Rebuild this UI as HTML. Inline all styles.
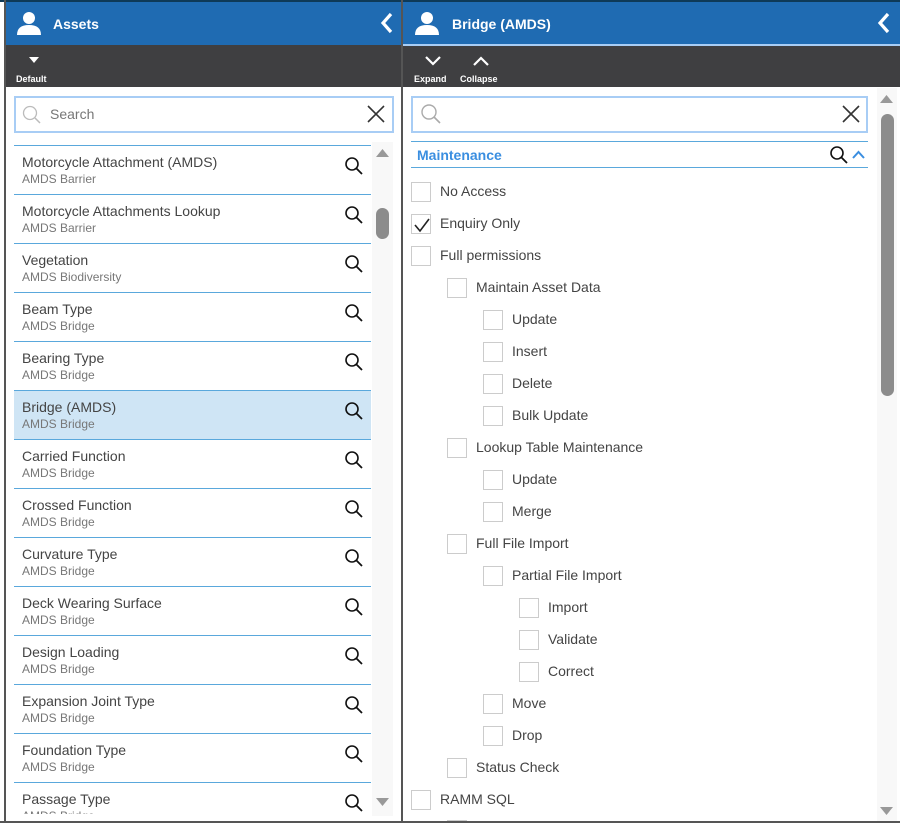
<!DOCTYPE html>
<html><head><meta charset="utf-8"><style>
*{margin:0;padding:0;box-sizing:border-box}
body{width:900px;height:823px;overflow:hidden;background:#fff;font-family:"Liberation Sans",Arial,sans-serif;position:relative}
.a{position:absolute}
.hdr{background:#1f6bb2;top:2px;height:43px}
.tb{background:#3f3f41;top:45px;height:42px}
.ht{color:#fff;font-weight:bold;font-size:14px;top:16px}
.tl{color:#fff;font-weight:bold;font-size:9px}
.row{position:absolute;left:14px;width:357px;height:49px;border-bottom:1px solid #5aa8dc}
.row .t{position:absolute;left:8px;top:8px;font-size:14px;color:#444}
.row .s{position:absolute;left:8px;top:26px;font-size:12px;color:#777}
.row svg{position:absolute;left:330px;top:10px}
.cb{position:absolute;width:20px;height:20px;border:1px solid #ccc;background:#fff}
.cl{position:absolute;font-size:14px;color:#444}
</style></head><body>
<div class="a" style="left:0;top:0;width:900px;height:2px;background:#0e3a58"></div>
<!-- left panel -->
<div class="a" style="left:4px;top:0;width:2px;height:823px;background:#555"></div>
<div class="a hdr" style="left:6px;width:395px"></div>
<svg class="a" style="left:16px;top:11px" width="26" height="24" viewBox="0 0 26 24"><circle cx="13" cy="7" r="6" fill="#fff"/><path d="M1 24 Q1 14 13 14 Q25 14 25 24Z" fill="#fff"/></svg>
<div class="a ht" style="left:53px">Assets</div>
<svg class="a" style="left:380px;top:12px" width="14" height="22" viewBox="0 0 14 22"><path d="M11 2 L3 11 L11 20" stroke="#fff" stroke-width="3.2" fill="none"/></svg>
<div class="a tb" style="left:6px;width:395px"></div>
<svg class="a" style="left:29px;top:57px" width="10" height="6"><path d="M0 0 L10 0 L5 6Z" fill="#fff"/></svg>
<div class="a tl" style="left:16px;top:74px">Default</div>
<div class="a" style="left:14px;top:96px;width:380px;height:37px;border:2px solid #a8cdf5"></div>
<svg class="a" style="left:22px;top:105px" width="20" height="20"><circle cx="8" cy="8" r="6.5" stroke="#bbb" stroke-width="1.3" fill="none"/><path d="M13 13 L18 18" stroke="#bbb" stroke-width="1.5"/></svg>
<div class="a" style="left:50px;top:106px;font-size:14px;color:#777">Search</div>
<svg class="a" style="left:367px;top:105px" width="18" height="18"><path d="M1 1L17 17M17 1L1 17" stroke="#333" stroke-width="1.6"/></svg>
<div class="a" style="left:14px;top:145px;width:357px;height:1px;background:#5aa8dc"></div>
<div class="a" style="left:14px;top:146px;width:358px;height:668px;overflow:hidden">
<div style="position:relative;left:-14px">
<div class="row" style="top:0"><div class="t">Motorcycle Attachment (AMDS)</div><div class="s">AMDS Barrier</div><svg width="20" height="20"><circle cx="8" cy="8" r="6" stroke="#111" stroke-width="1.6" fill="none"/><path d="M12.5 12.5L18 18" stroke="#111" stroke-width="1.8"/></svg></div>
<div class="row" style="top:49px"><div class="t">Motorcycle Attachments Lookup</div><div class="s">AMDS Barrier</div><svg width="20" height="20"><circle cx="8" cy="8" r="6" stroke="#111" stroke-width="1.6" fill="none"/><path d="M12.5 12.5L18 18" stroke="#111" stroke-width="1.8"/></svg></div>
<div class="row" style="top:98px"><div class="t">Vegetation</div><div class="s">AMDS Biodiversity</div><svg width="20" height="20"><circle cx="8" cy="8" r="6" stroke="#111" stroke-width="1.6" fill="none"/><path d="M12.5 12.5L18 18" stroke="#111" stroke-width="1.8"/></svg></div>
<div class="row" style="top:147px"><div class="t">Beam Type</div><div class="s">AMDS Bridge</div><svg width="20" height="20"><circle cx="8" cy="8" r="6" stroke="#111" stroke-width="1.6" fill="none"/><path d="M12.5 12.5L18 18" stroke="#111" stroke-width="1.8"/></svg></div>
<div class="row" style="top:196px"><div class="t">Bearing Type</div><div class="s">AMDS Bridge</div><svg width="20" height="20"><circle cx="8" cy="8" r="6" stroke="#111" stroke-width="1.6" fill="none"/><path d="M12.5 12.5L18 18" stroke="#111" stroke-width="1.8"/></svg></div>
<div class="row" style="top:245px;background:#cfe5f5"><div class="t">Bridge (AMDS)</div><div class="s">AMDS Bridge</div><svg width="20" height="20"><circle cx="8" cy="8" r="6" stroke="#111" stroke-width="1.6" fill="none"/><path d="M12.5 12.5L18 18" stroke="#111" stroke-width="1.8"/></svg></div>
<div class="row" style="top:294px"><div class="t">Carried Function</div><div class="s">AMDS Bridge</div><svg width="20" height="20"><circle cx="8" cy="8" r="6" stroke="#111" stroke-width="1.6" fill="none"/><path d="M12.5 12.5L18 18" stroke="#111" stroke-width="1.8"/></svg></div>
<div class="row" style="top:343px"><div class="t">Crossed Function</div><div class="s">AMDS Bridge</div><svg width="20" height="20"><circle cx="8" cy="8" r="6" stroke="#111" stroke-width="1.6" fill="none"/><path d="M12.5 12.5L18 18" stroke="#111" stroke-width="1.8"/></svg></div>
<div class="row" style="top:392px"><div class="t">Curvature Type</div><div class="s">AMDS Bridge</div><svg width="20" height="20"><circle cx="8" cy="8" r="6" stroke="#111" stroke-width="1.6" fill="none"/><path d="M12.5 12.5L18 18" stroke="#111" stroke-width="1.8"/></svg></div>
<div class="row" style="top:441px"><div class="t">Deck Wearing Surface</div><div class="s">AMDS Bridge</div><svg width="20" height="20"><circle cx="8" cy="8" r="6" stroke="#111" stroke-width="1.6" fill="none"/><path d="M12.5 12.5L18 18" stroke="#111" stroke-width="1.8"/></svg></div>
<div class="row" style="top:490px"><div class="t">Design Loading</div><div class="s">AMDS Bridge</div><svg width="20" height="20"><circle cx="8" cy="8" r="6" stroke="#111" stroke-width="1.6" fill="none"/><path d="M12.5 12.5L18 18" stroke="#111" stroke-width="1.8"/></svg></div>
<div class="row" style="top:539px"><div class="t">Expansion Joint Type</div><div class="s">AMDS Bridge</div><svg width="20" height="20"><circle cx="8" cy="8" r="6" stroke="#111" stroke-width="1.6" fill="none"/><path d="M12.5 12.5L18 18" stroke="#111" stroke-width="1.8"/></svg></div>
<div class="row" style="top:588px"><div class="t">Foundation Type</div><div class="s">AMDS Bridge</div><svg width="20" height="20"><circle cx="8" cy="8" r="6" stroke="#111" stroke-width="1.6" fill="none"/><path d="M12.5 12.5L18 18" stroke="#111" stroke-width="1.8"/></svg></div>
<div class="row" style="top:637px"><div class="t">Passage Type</div><div class="s">AMDS Bridge</div><svg width="20" height="20"><circle cx="8" cy="8" r="6" stroke="#111" stroke-width="1.6" fill="none"/><path d="M12.5 12.5L18 18" stroke="#111" stroke-width="1.8"/></svg></div>
</div></div>
<div class="a" style="left:372px;top:142px;width:21px;height:674px;background:#f8f8f8"></div>
<svg class="a" style="left:376px;top:149px" width="13" height="8"><path d="M0 8L6.5 0L13 8Z" fill="#999"/></svg>
<div class="a" style="left:376px;top:208px;width:13px;height:31px;border-radius:7px;background:#8c8c8c"></div>
<svg class="a" style="left:376px;top:798px" width="13" height="8"><path d="M0 0L6.5 8L13 0Z" fill="#999"/></svg>
<!-- divider -->
<div class="a" style="left:401px;top:0;width:2px;height:823px;background:#555"></div>
<!-- right panel -->
<div class="a hdr" style="left:403px;width:497px;height:42px"></div>
<div class="a" style="left:403px;top:44px;width:497px;height:2px;background:#a8cdf5"></div>
<svg class="a" style="left:414px;top:11px" width="26" height="24" viewBox="0 0 26 24"><circle cx="13" cy="7" r="6" fill="#fff"/><path d="M1 24 Q1 14 13 14 Q25 14 25 24Z" fill="#fff"/></svg>
<div class="a ht" style="left:452px">Bridge (AMDS)</div>
<svg class="a" style="left:877px;top:12px" width="14" height="22" viewBox="0 0 14 22"><path d="M11 2 L3 11 L11 20" stroke="#fff" stroke-width="3.2" fill="none"/></svg>
<div class="a tb" style="left:403px;width:497px;top:46px;height:41px"></div>
<svg class="a" style="left:425px;top:56px" width="16" height="10"><path d="M1 1L8 8L15 1" stroke="#fff" stroke-width="2.2" fill="none"/></svg>
<svg class="a" style="left:473px;top:56px" width="16" height="10"><path d="M1 9L8 2L15 9" stroke="#fff" stroke-width="2.2" fill="none"/></svg>
<div class="a tl" style="left:414px;top:74px">Expand</div>
<div class="a tl" style="left:460px;top:74px">Collapse</div>
<div class="a" style="left:411px;top:96px;width:457px;height:37px;border:2px solid #a8cdf5"></div>
<svg class="a" style="left:420px;top:103px" width="22" height="22"><circle cx="9" cy="9" r="7" stroke="#aaa" stroke-width="1.4" fill="none"/><path d="M14 14L20 20" stroke="#aaa" stroke-width="1.6"/></svg>
<svg class="a" style="left:842px;top:105px" width="18" height="18"><path d="M1 1L17 17M17 1L1 17" stroke="#333" stroke-width="1.6"/></svg>
<div class="a" style="left:411px;top:141px;width:457px;height:1px;background:#5aa8dc"></div>
<div class="a" style="left:411px;top:167px;width:457px;height:1px;background:#5aa8dc"></div>
<div class="a" style="left:417px;top:147px;font-size:14px;font-weight:bold;color:#3a8ee0">Maintenance</div>
<svg class="a" style="left:829px;top:145px" width="20" height="20"><circle cx="8" cy="8" r="6" stroke="#111" stroke-width="1.6" fill="none"/><path d="M12.5 12.5L18 18" stroke="#111" stroke-width="1.8"/></svg>
<svg class="a" style="left:852px;top:150px" width="13" height="9"><path d="M1 8L6.5 2L12 8" stroke="#3a8ee0" stroke-width="2" fill="none"/></svg>

<div class="cb" style="left:411px;top:182px"></div><div class="cl" style="left:440px;top:183px">No Access</div>
<div class="cb" style="left:411px;top:214px"></div><svg class="a" style="left:413px;top:216px" width="18" height="18"><path d="M2 9L7 15L16 3" stroke="#222" stroke-width="1.6" fill="none"/></svg><div class="cl" style="left:440px;top:215px">Enquiry Only</div>
<div class="cb" style="left:411px;top:246px"></div><div class="cl" style="left:440px;top:247px">Full permissions</div>
<div class="cb" style="left:447px;top:278px"></div><div class="cl" style="left:476px;top:279px">Maintain Asset Data</div>
<div class="cb" style="left:483px;top:310px"></div><div class="cl" style="left:512px;top:311px">Update</div>
<div class="cb" style="left:483px;top:342px"></div><div class="cl" style="left:512px;top:343px">Insert</div>
<div class="cb" style="left:483px;top:374px"></div><div class="cl" style="left:512px;top:375px">Delete</div>
<div class="cb" style="left:483px;top:406px"></div><div class="cl" style="left:512px;top:407px">Bulk Update</div>
<div class="cb" style="left:447px;top:438px"></div><div class="cl" style="left:476px;top:439px">Lookup Table Maintenance</div>
<div class="cb" style="left:483px;top:470px"></div><div class="cl" style="left:512px;top:471px">Update</div>
<div class="cb" style="left:483px;top:502px"></div><div class="cl" style="left:512px;top:503px">Merge</div>
<div class="cb" style="left:447px;top:534px"></div><div class="cl" style="left:476px;top:535px">Full File Import</div>
<div class="cb" style="left:483px;top:566px"></div><div class="cl" style="left:512px;top:567px">Partial File Import</div>
<div class="cb" style="left:519px;top:598px"></div><div class="cl" style="left:548px;top:599px">Import</div>
<div class="cb" style="left:519px;top:630px"></div><div class="cl" style="left:548px;top:631px">Validate</div>
<div class="cb" style="left:519px;top:662px"></div><div class="cl" style="left:548px;top:663px">Correct</div>
<div class="cb" style="left:483px;top:694px"></div><div class="cl" style="left:512px;top:695px">Move</div>
<div class="cb" style="left:483px;top:726px"></div><div class="cl" style="left:512px;top:727px">Drop</div>
<div class="cb" style="left:447px;top:758px"></div><div class="cl" style="left:476px;top:759px">Status Check</div>
<div class="cb" style="left:411px;top:790px"></div><div class="cl" style="left:440px;top:791px">RAMM SQL</div>
<div class="a" style="left:447px;top:820px;width:20px;height:1px;background:#ccc"></div>

<div class="a" style="left:877px;top:88px;width:20px;height:734px;background:#f8f8f8"></div>
<svg class="a" style="left:880px;top:95px" width="13" height="8"><path d="M0 8L6.5 0L13 8Z" fill="#999"/></svg>
<div class="a" style="left:881px;top:114px;width:13px;height:282px;border-radius:7px;background:#8c8c8c"></div>
<svg class="a" style="left:880px;top:807px" width="13" height="8"><path d="M0 0L6.5 8L13 0Z" fill="#999"/></svg>
<div class="a" style="left:0;top:821px;width:900px;height:2px;background:#555"></div>
</body></html>
